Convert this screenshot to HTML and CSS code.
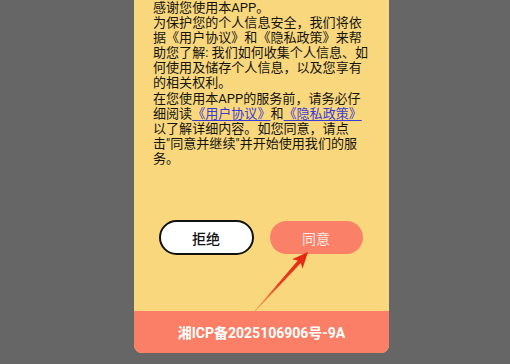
FILE: index.html
```html
<!DOCTYPE html>
<html lang="zh-CN">
<head>
<meta charset="utf-8">
<title>隐私政策</title>
<link rel="stylesheet" href="styles.css">
</head>
<body>
<div class="card">
  <div class="content">
    <p class="notice">感谢您使用本APP。<br>为保护您的个人信息安全，我们将依据《用户协议》和《隐私政策》来帮助您了解: 我们如何收集个人信息、如何使用及储存个人信息，以及您享有的相关权利。<br>在您使用本APP的服务前，请务必仔细阅读<a class="link" href="#">《用户协议》</a>和<a class="link" href="#">《隐私政策》</a>以了解详细内容。如您同意，请点击"同意并继续"并开始使用我们的服务。</p>
    <div class="actions">
      <button class="btn btn-reject">拒绝</button>
      <button class="btn btn-agree">同意</button>
    </div>
  </div>
  <div class="footer">湘ICP备2025106906号-9A</div>
  <svg class="arrow" width="64" height="70" viewBox="0 0 64 70">
    <defs>
      <linearGradient id="ag" x1="0" y1="1" x2="1" y2="0">
        <stop offset="0" stop-color="#f4703a" stop-opacity="0.5"/>
        <stop offset="0.45" stop-color="#ec3c1e"/>
        <stop offset="1" stop-color="#e2260f"/>
      </linearGradient>
    </defs>
    <polygon fill="url(#ag)" points="4.7,64.7 47.8,14.4 42.1,13.3 58,6 52.5,22.7 50.8,17 5.3,65.3"/>
  </svg>
</div>
</body>
</html>
```

FILE: styles.css
```css
html, body {
  margin: 0;
  padding: 0;
}
body {
  background: #666666;
  width: 510px;
  height: 364px;
  overflow: hidden;
  font-family: Roboto, "Noto Sans CJK SC", sans-serif;
}
.card {
  position: relative;
  width: 255px;
  margin-left: 134px;
  background: #f9d77d;
  border-radius: 0 0 8px 8px;
  overflow: hidden;
  display: flex;
  flex-direction: column;
}
.content {
  padding: 0 14px 0 19px;
  display: flex;
  flex-direction: column;
}
.notice {
  margin: 0;
  width: 215.5px;
  font-size: 13.05px;
  line-height: 15.1px;
  color: #141414;
}
.link {
  color: #3a3ad6;
  text-decoration: underline;
  text-underline-offset: 2px;
}
.actions {
  display: flex;
  justify-content: center;
  align-items: center;
  gap: 16px;
  margin-top: 54px;
  margin-right: -14px;
  margin-left: -19px;
  padding-right: 2px;
  height: 35px;
}
.btn {
  font-family: Roboto, "Noto Sans CJK SC", sans-serif;
  font-size: 14px;
  border-radius: 18px;
  padding: 0;
  cursor: pointer;
}
.btn-reject {
  width: 95px;
  height: 35px;
  background: #ffffff;
  border: 2px solid #111111;
  color: #111111;
  font-weight: 500;
}
.btn-agree {
  width: 93px;
  height: 33px;
  background: #fa8068;
  border: none;
  color: rgba(255, 255, 255, 0.85);
  font-weight: 400;
}
.footer {
  margin-top: 56px;
  height: 42px;
  background: #fa7f66;
  color: #ffffff;
  font-size: 14px;
  font-weight: 700;
  display: flex;
  align-items: center;
  justify-content: center;
}
.arrow {
  position: absolute;
  left: 116px;
  top: 246px;
}
```
